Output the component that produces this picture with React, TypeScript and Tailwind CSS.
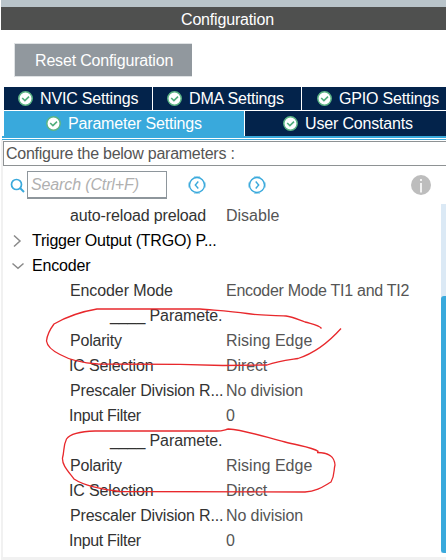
import React from "react";

function Check() {
  return (
    <svg width="15" height="15" viewBox="0 0 15 15" className="block shrink-0">
      <circle cx="7.5" cy="7.5" r="6.7" fill="#fff" stroke="#5cb585" strokeWidth="1.5" />
      <path d="M4.2 7 L6.9 9.6 L11 5.7" fill="none" stroke="#4fae7b" strokeWidth="1.6" />
    </svg>
  );
}

function Tab({ label, className }: { label: string; className: string }) {
  return (
    <div className={`flex shrink-0 items-center text-[16px] tracking-[-0.17px] text-white ${className}`}>
      <Check />
      <span className="ml-[7px] pt-px">{label}</span>
    </div>
  );
}

function Nav({ flip }: { flip?: boolean }) {
  return (
    <svg width="18" height="18" viewBox="0 0 18 18" className="block shrink-0">
      <circle cx="9" cy="9" r="7.5" fill="none" stroke="#39a9dc" strokeWidth="1.4" />
      <path d="M6 0.6h6M6 17.4h6M0.6 6.500v5M17.400 6.500v5" stroke="#39a9dc" strokeWidth="1" opacity="0.45" />
      <path d={flip ? "M7.7 5.500 L10.7 9 L7.7 12.500" : "M10.3 5.500 L7.3 9 L10.3 12.500"} fill="none" stroke="#39a9dc" strokeWidth="1.4" />
    </svg>
  );
}

type RowProps = { name: string; value?: string; nameClass?: string; valueClass?: string };

function Row({ name, value, nameClass = "", valueClass = "" }: RowProps) {
  return (
    <div className="flex h-[25px] items-center">
      <span className={`w-[156px] shrink-0 text-[#333] ${nameClass}`}>{name}</span>
      <span className={`text-[#555] ${valueClass}`}>{value}</span>
    </div>
  );
}

function Group({ name, open, className }: { name: string; open?: boolean; className: string }) {
  return (
    <div className={`-ml-[58px] flex h-[25px] items-center text-black ${className}`}>
      <svg width="12" height="14" viewBox="0 0 12 14" className="mr-[8px] block">
        <path d={open ? "M0.5 4.500 L6 9.300 L11.500 4.500" : "M2 1.500 L8 7 L2 12.500"} fill="none" stroke="#8a8a8a" strokeWidth="1.5" />
      </svg>
      <span>{name}</span>
    </div>
  );
}

function ParameterBlock() {
  return (
    <>
      <div className="flex h-[25px] items-center pl-[40px] tracking-[-0.1px] text-[#333]">____ Paramete.</div>
      <Row name="Polarity" value="Rising Edge" nameClass="tracking-[-0.2px]" />
      <Row name="IC Selection" value="Direct" nameClass="-ml-px mr-px tracking-[-0.15px]" valueClass="tracking-[-0.1px]" />
      <Row name="Prescaler Division R..." value="No division" nameClass="tracking-[-0.18px]" valueClass="tracking-[-0.1px]" />
      <Row name="Input Filter" value="0" nameClass="-ml-px mr-px tracking-[-0.32px]" />
    </>
  );
}

export default function App() {
  return (
    <div className="relative flex h-[560px] w-[446px] flex-col overflow-hidden whitespace-nowrap bg-white font-['Liberation_Sans',Arial,sans-serif] text-[16px] leading-[18px]">
      <div className="ml-px h-[7px] shrink-0 bg-[#b9c4ca]" />
      <div className="ml-px flex h-[23px] shrink-0 items-center bg-[#4f504f] pl-[180px] pt-[2px] tracking-[-0.17px] text-white">Configuration</div>
      <div className="mt-[13px] ml-[14px] flex h-[34px] w-[178px] shrink-0 items-center border-y border-l border-[#dfe2e4] bg-[#91989e] pl-[20px] pt-px tracking-[-0.17px] text-white">Reset Configuration</div>
      <div className="mt-[10px] ml-[4px] flex h-[23px] shrink-0 gap-px">
        <Tab label="NVIC Settings" className="w-[148px] bg-[#03234b] pl-[14px]" />
        <Tab label="DMA Settings" className="w-[148px] bg-[#03234b] pl-[14px]" />
        <Tab label="GPIO Settings" className="w-[144px] bg-[#03234b] pl-[15px]" />
      </div>
      <div className="mt-px ml-[4px] flex h-[25px] shrink-0 gap-px">
        <Tab label="Parameter Settings" className="w-[240px] bg-[#39a9dc] pb-px pl-[42px]" />
        <Tab label="User Constants" className="w-[201px] bg-[#03234b] pb-px pl-[38px]" />
      </div>
      <div className="ml-[2px] h-[4px] shrink-0 border-t-2 border-b border-[#39a9dc]" />
      <div className="ml-px flex flex-1 flex-col border-b-[3px] border-l-2 border-[#f1f1f1]">
        <div className="mt-px flex h-[25px] shrink-0 items-center border-y border-l border-[#8e9294] pl-[2px] pt-px tracking-[-0.25px] text-[#555]">Configure the below parameters :</div>
        <div className="mt-[4px] flex h-[30px] shrink-0 items-center pl-[7px]">
          <svg width="15" height="15" viewBox="0 0 15 15" className="block">
            <circle cx="6.5" cy="6.5" r="5" fill="none" stroke="#39a9dc" strokeWidth="1.7" />
            <path d="M10 10 L14 14" stroke="#39a9dc" strokeWidth="2" />
          </svg>
          <div className="ml-[2px] flex h-[28px] w-[140px] items-center border border-b-2 border-[#8e969c] pl-[3px] pt-px tracking-[-0.13px] italic text-[#b0b0b0]">Search (Ctrl+F)</div>
          <div className="ml-[21px]"><Nav /></div>
          <div className="ml-[42px]"><Nav flip /></div>
          <svg width="20" height="20" viewBox="0 0 20 20" className="ml-[145px] block">
            <circle cx="10" cy="10" r="10" fill="#bdbdbd" />
            <path d="M10 4v2M10 8v9.500" stroke="#fff" strokeWidth="1.6" />
          </svg>
        </div>
        <div className="mt-[3px] flex h-[350px] shrink-0 justify-between">
          <div className="pl-[67px]">
            <Row name="auto-reload preload" value="Disable" nameClass="tracking-[-0.14px]" />
            <Group name="Trigger Output (TRGO) P..." className="tracking-[-0.22px]" />
            <Group name="Encoder" open className="tracking-[-0.15px]" />
            <Row name="Encoder Mode" value="Encoder Mode TI1 and TI2" nameClass="tracking-[-0.1px]" valueClass="tracking-[-0.28px]" />
            <ParameterBlock />
            <ParameterBlock />
          </div>
          <div className="mt-px w-[5px] bg-[#dbe9f5] pt-[92px]">
            <div className="h-[257px] rounded-l-[3px] bg-[#39a9dc]" />
          </div>
        </div>
      </div>
      <svg width="446" height="560" viewBox="0 0 446 560" className="absolute top-0 left-0" fill="none" stroke="#e8282c" strokeWidth="1.3">
        <path d="M321.5 328.5 C319 325 314 324.5 305 322 C297 319 292 316.500 286 316 C272 315 258 315.500 247 313.500 C230 311 217 310.500 200 309 L97 309 C82 311.500 66 317 54 324 C48 332 47 336 46.500 341 C47 345 51 350 60 354.500 C68 359 82 363 98 364 L180 364.300 L223 365.500 L267 365 C278 361 288 360 298 358.500 C315 353 328 343 341 328.500" />
        <path d="M318.5 451.5 C312 447 300 446 285 442 C265 437 245 430 228.500 429 C224 430 222 431 217 431 L95 431 C79 431.500 70 434 66.500 439 C63 446 64.500 451 62.500 458 C62 465 68 471 74 479 C83 485 102 490 120 491.500 L305 492 C317 491.500 324 486 331 482 C335 475 333.500 470 335 465 C334.500 459 332 452.500 317 452.500" />
      </svg>
    </div>
  );
}
